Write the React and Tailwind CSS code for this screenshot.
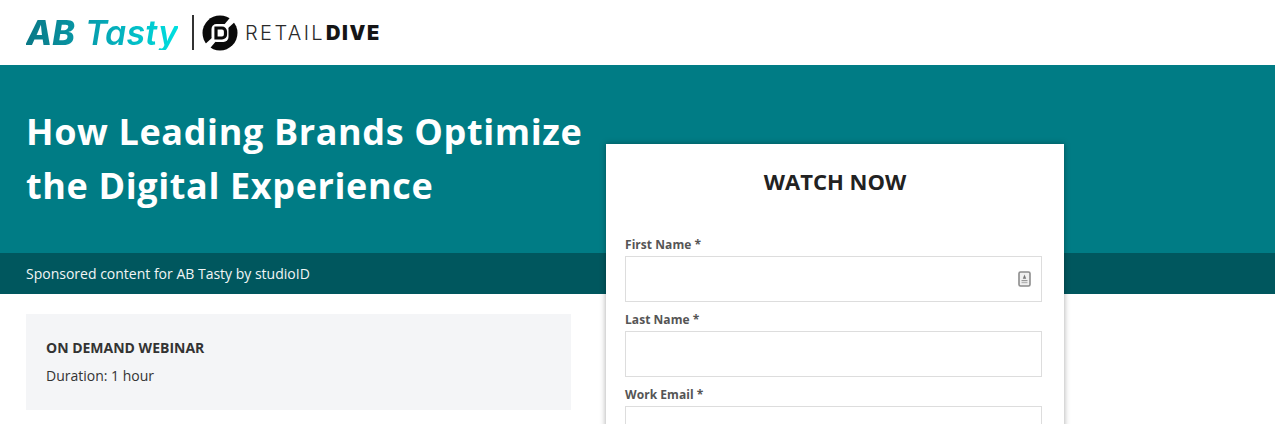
import React from "react";

const font = { fontFamily: '"Open Sans", sans-serif' };
const logoFont = { fontFamily: 'Inter, sans-serif' };

function Field({ label, icon }) {
  return (
    <div className="mb-[9px]">
      <label className="block text-[12px] leading-[18px] font-bold text-[#555555] tracking-[0.05px]">{label}</label>
      <div className="mt-[2px] h-[46px] border border-[#dddddd] bg-white flex items-center justify-end pr-[10px]">
        {icon && (
          <svg width="13" height="16" viewBox="0 0 13 16" className="block">
            <rect x="1" y="1" width="11" height="14" rx="1.5" fill="#f0f0f0" stroke="#8c8c8c" strokeWidth="1.6" />
            <path d="M6.5 3.5 L8.2 7.8 H4.8 Z" fill="#777777" />
            <rect x="3.5" y="9" width="6" height="1.2" fill="#999999" />
            <rect x="3.5" y="11" width="6" height="1.2" fill="#b5b5b5" />
          </svg>
        )}
      </div>
    </div>
  );
}

export default function App() {
  return (
    <div className="relative w-[1275px] h-[424px] overflow-hidden bg-white" style={font}>
      <header className="h-[65px] flex items-center pl-[26px]">
        <span
          className="w-[152px] text-[34px] leading-none italic tracking-[0.2px] bg-gradient-to-r from-[#0a7886] via-[#05a5b4] to-[#00e0e0] bg-clip-text text-transparent whitespace-nowrap"
          style={logoFont}
        >
          <span className="font-extrabold">AB</span> <span className="font-semibold">Tasty</span>
        </span>
        <div className="ml-[14px] w-[2px] h-[35px] bg-[#333333]" />
        <svg width="36" height="36" viewBox="0 0 36 36" className="ml-[8px]">
          <circle cx="18" cy="18" r="17.5" fill="#0a0a0a" />
          <rect x="9.5" y="9" width="17" height="18" rx="5" fill="#fff" />
          <path d="M-1 33 L12 21 L15 25 L4 38 Z" fill="#fff" />
          <path d="M37 3 L24 15 L21 11 L32 -2 Z" fill="#fff" />
          <path d="M14 13 H20 A3.5 3.5 0 0 1 23.5 16.5 V19.5 A3.5 3.5 0 0 1 20 23 H14 Z" fill="none" stroke="#0a0a0a" strokeWidth="3.2" />
        </svg>
        <span className="ml-[7px] text-[20px] leading-none whitespace-nowrap" style={logoFont}>
          <span className="font-light text-[#2a2a2a] tracking-[2.4px]">RETAIL</span>
          <span className="font-black text-[#151515] ml-[1px] tracking-[1.6px]">DIVE</span>
        </span>
      </header>

      <section className="h-[188px] bg-[#007c85] pl-[26px] pt-[40px]">
        <h1 className="w-[570px] text-[36px] leading-[54px] font-bold text-white tracking-[0.62px]">
          How Leading Brands Optimize the Digital Experience
        </h1>
      </section>

      <div className="h-[41px] bg-[#00575e] pl-[26px] flex items-center text-[14px] text-[#f2f5f5]">
        Sponsored content for AB Tasty by studioID
      </div>

      <main className="pl-[26px] pt-[20px]">
        <div className="w-[545px] h-[96px] bg-[#f4f5f7] px-[20px] pt-[24px]">
          <p className="text-[14px] leading-[20px] font-bold text-[#333333]">ON DEMAND WEBINAR</p>
          <p className="mt-[8px] text-[14px] leading-[20px] text-[#333333]">Duration: 1 hour</p>
        </div>
      </main>

      <aside className="absolute left-[606px] top-[144px] w-[458px] h-[400px] bg-white shadow-[0_0_6px_rgba(0,0,0,0.35)] pl-[19px] pr-[22px] pt-[20px]">
        <h2 className="pl-[3px] text-center text-[22px] leading-[34px] font-bold text-[#222222] mb-[38px]">WATCH NOW</h2>
        <Field label="First Name *" icon />
        <Field label="Last Name *" />
        <Field label="Work Email *" />
      </aside>
    </div>
  );
}
